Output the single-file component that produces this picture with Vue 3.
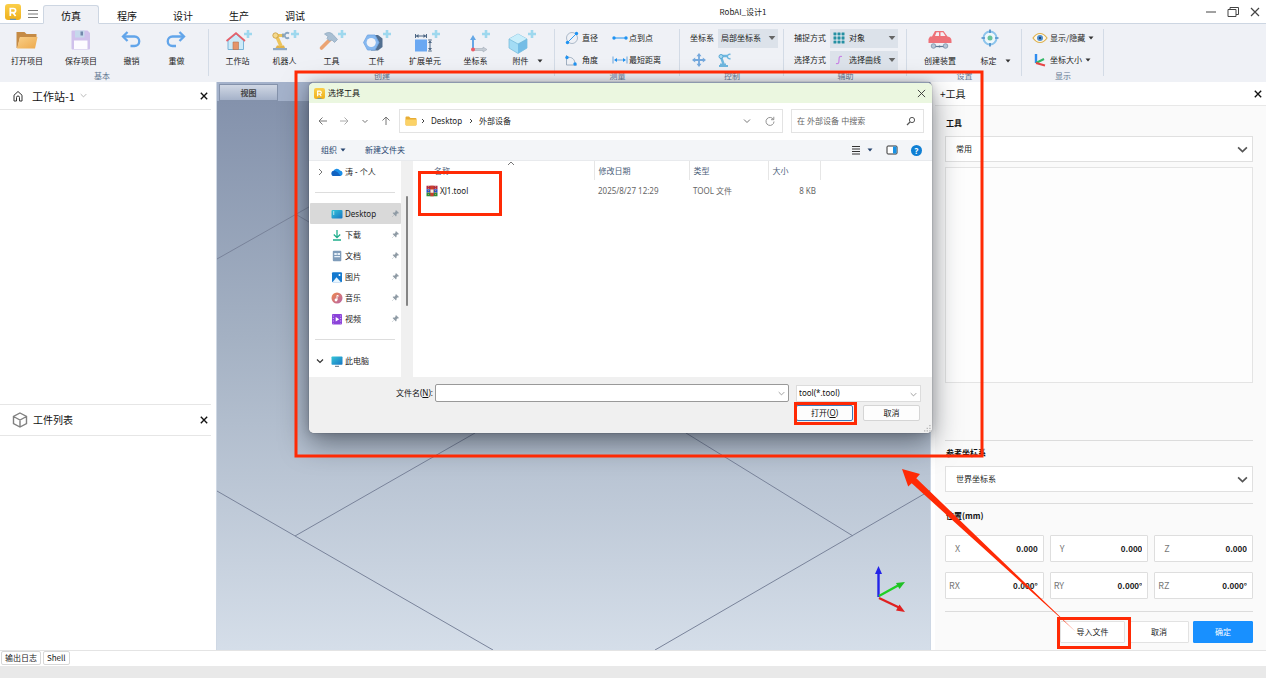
<script setup>
import { ref } from 'vue'

const tabs = ['仿真', '程序', '设计', '生产', '调试']
const activeTab = ref('仿真')

const basicTools = [
  { icon: 'folder', label: '打开项目', size: 'wide' },
  { icon: 'save', label: '保存项目', size: 'wide' },
  { icon: 'undo', label: '撤销', size: 'mid' },
  { icon: 'redo', label: '重做', size: 'slim' },
]
const createTools = [
  { icon: 'house', label: '工作站', size: 'mid' },
  { icon: 'robot', label: '机器人', size: 'mid' },
  { icon: 'hammer', label: '工具', size: 'mid' },
  { icon: 'nut', label: '工件', size: 'slim' },
  { icon: 'extend', label: '扩展单元', size: 'wide' },
  { icon: 'axes', label: '坐标系', size: 'mid' },
  { icon: 'cube', label: '附件', size: 'slim' },
]
const measureTools = [
  { icon: 'diameter', label: '直径' },
  { icon: 'points', label: '点到点' },
  { icon: 'angle', label: '角度' },
  { icon: 'distance', label: '最短距离' },
]
const places = [
  { icon: 'desktop', label: 'Desktop', active: true },
  { icon: 'download', label: '下载' },
  { icon: 'doc', label: '文档' },
  { icon: 'picture', label: '图片' },
  { icon: 'music', label: '音乐' },
  { icon: 'video', label: '视频' },
]
const fields = ref([
  { name: 'X', value: '0.000' },
  { name: 'Y', value: '0.000' },
  { name: 'Z', value: '0.000' },
  { name: 'RX', value: '0.000°' },
  { name: 'RY', value: '0.000°' },
  { name: 'RZ', value: '0.000°' },
])
const fileName = ref('')
</script>

<template>
  <div class="app">
    <svg class="defs" aria-hidden="true">
      <defs>
        <linearGradient id="gFolder" x1="0" y1="0" x2="1" y2="1"><stop offset="0" stop-color="#f9cf87" /><stop offset="1" stop-color="#eda94c" /></linearGradient>
        <linearGradient id="gLogo" x1="0" y1="0" x2="0" y2="1"><stop offset="0" stop-color="#fbcf4a" /><stop offset="1" stop-color="#eeb01c" /></linearGradient>
        <linearGradient id="gScreen" x1="0" y1="0" x2="1" y2="1"><stop offset="0" stop-color="#35c6d8" /><stop offset="1" stop-color="#1775c4" /></linearGradient>
        <linearGradient id="gMusic" x1="0" y1="0" x2="1" y2="1"><stop offset="0" stop-color="#f08a4b" /><stop offset="1" stop-color="#b763a8" /></linearGradient>
      </defs>
      <symbol id="logo" viewBox="0 0 16 16">
        <rect width="16" height="16" rx="3" fill="url(#gLogo)" />
        <path d="M5.300 12V4.500h3.200a2 2 0 0 1 0 4.200H5.300M8 8.700l2.600 3.300" fill="none" stroke="#fff" stroke-width="1.700" />
        <path d="M5 15.300h6" stroke="#4a90d9" stroke-width="1" />
      </symbol>
      <symbol id="plus" viewBox="0 0 8 8"><path d="M2.700 0h2.600v2.700H8v2.600H5.300V8H2.700V5.300H0V2.700h2.700z" fill="#9ed8ee" /></symbol>
      <symbol id="folder" viewBox="0 0 32 26">
        <path d="M5.500 4h8l2 2h10v3H9l-2.500 11h-1z" fill="#c58b45" />
        <path d="M9 9h17.500L24 20.500H6z" fill="url(#gFolder)" />
      </symbol>
      <symbol id="save" viewBox="0 0 32 26">
        <path d="M6.500 3.500a1 1 0 0 1 1-1h15l2.500 2.500v15.500a1 1 0 0 1-1 1h-16.500a1 1 0 0 1-1-1z" fill="#d0c1ec" />
        <path d="M10 2.500h9.500v7H10z" fill="#c6d8ec" /><path d="M15.500 3.500h2.500v4h-2.500z" fill="#7188ab" />
        <path d="M9 12.500h13.500v8.500H9z" fill="#fcfbff" />
      </symbol>
      <symbol id="undo" viewBox="0 0 32 26">
        <path d="M8 8.500h10.500a4.700 4.700 0 0 1 0 9.500h-4" fill="none" stroke="#62a5ea" stroke-width="2.300" />
        <path d="M11.500 4 7 8.500l4.500 4.500" fill="none" stroke="#62a5ea" stroke-width="2.300" />
      </symbol>
      <symbol id="redo" viewBox="0 0 32 26">
        <path d="M22.500 8.500H11.500a4.700 4.700 0 0 0 0 9.500h3.500" fill="none" stroke="#62a5ea" stroke-width="2.300" />
        <path d="M18.500 4 23 8.500 18.500 13" fill="none" stroke="#62a5ea" stroke-width="2.300" />
      </symbol>
      <symbol id="house" viewBox="0 0 32 26">
        <path d="M6 12.500v9h15.500v-9L14 6z" fill="#cdeaf8" stroke="#79b4d8" />
        <path d="M4.500 13 14 5l9 8" fill="none" stroke="#e8606a" stroke-width="1.700" />
        <path d="M11 14h5.500v7.500H11z" fill="#e59468" stroke="#b47450" stroke-width=".6" />
        <use href="#plus" x="22" y="2" width="8" height="8" />
      </symbol>
      <symbol id="robot" viewBox="0 0 32 26">
        <path d="M4 20h14v2.200H4z" fill="#8faac4" /><path d="M8 17.500h7l1 2.500H6.500z" fill="#e2b34a" />
        <path d="M12 18 7.500 8" stroke="#edc45a" stroke-width="3.400" /><path d="M7 7.500h8" stroke="#edc45a" stroke-width="3" />
        <circle cx="6.500" cy="7.500" r="2.700" fill="#f5d98b" stroke="#c59a42" stroke-width=".8" /><path d="M14 5.500v4" stroke="#789ab9" stroke-width="1.500" />
        <path d="M20 5.500a2.600 2.600 0 1 0 0 4" fill="none" stroke="#8aa7c4" stroke-width="1.800" />
        <use href="#plus" x="22" y="2" width="8" height="8" />
      </symbol>
      <symbol id="hammer" viewBox="0 0 32 26">
        <path d="M14 11.500 5.500 20" stroke="#eba473" stroke-width="3.600" stroke-linecap="round" />
        <path d="M8.500 6c3-2 6-2 8.500.5l4.500 5-3 3-2.500-2.500-2.500 1-2.500-2.500 1-2z" fill="#a9bfd3" stroke="#8ba6bf" stroke-width=".7" />
        <use href="#plus" x="22" y="2" width="8" height="8" />
      </symbol>
      <symbol id="nut" viewBox="0 0 32 26">
        <path d="M10 7h7l4.500 3.500v8.500L17 22.500h-7z" fill="#526f90" />
        <path d="M6.500 7h7.500l4 7.500-4 7.500H6.500l-4-7.500z" fill="#86b8f0" stroke="#70a5e2" stroke-width=".8" /><circle cx="10.200" cy="14.500" r="4.600" fill="#f1f3f8" />
        <use href="#plus" x="22" y="2" width="8" height="8" />
      </symbol>
      <symbol id="extend" viewBox="0 0 32 26">
        <path d="M6 11.500h12v12H6z" fill="#6aa8f2" />
        <path d="M7 8h10M6.500 6v4M17.500 6v4M21 13v9M19.200 12h3.600M19.200 23h3.600" stroke="#4d6784" stroke-width="1" fill="none" />
        <path d="m7 8 2.500-2v4zM17 8l-2.500-2v4zM21 12.500l-2 2.500h4zM21 22.500l-2-2.500h4z" fill="#4d6784" />
        <use href="#plus" x="23" y="2" width="8" height="8" />
      </symbol>
      <symbol id="axes" viewBox="0 0 32 26">
        <path d="M13 21V10" stroke="#64a7e6" stroke-width="2" /><path d="m13 7-3 5h6z" fill="#64a7e6" />
        <path d="M13 20.500h10v-1.500l4 2.500-4 2.500v-1.500H13z" fill="#c6cdd5" stroke="#9ba5b0" stroke-width=".5" />
        <circle cx="13" cy="21.500" r="2" fill="#ec5c66" />
        <use href="#plus" x="22" y="2" width="8" height="8" />
      </symbol>
      <symbol id="cube" viewBox="0 0 32 26">
        <path d="m13 6 9 5v9l-9 5.500L4 20v-9z" fill="#a3dcf5" stroke="#72b8d9" stroke-width=".7" />
        <path d="m4 11 9 5 9-5-9-5z" fill="#c9eefb" /><path d="m13 16 9-5v9l-9 5.500z" fill="#74bde6" /><path d="m4 11 9 5 9-5" fill="none" stroke="#72b8d9" stroke-width=".7" />
        <use href="#plus" x="23" y="2" width="8" height="8" />
      </symbol>
      <symbol id="car" viewBox="0 0 32 26">
        <path d="M6 8.500h2L11 3h8.500l4 5.500c3 .5 4 2 4 4.500v2H4.500v-4z" fill="#ee7178" /><path d="M11 8 12.500 4.300H15V8zM16.500 4.300H19L21.500 8h-5z" fill="#f5f0f4" />
        <path d="M10 18.500h11" stroke="#5f7894" stroke-width="1.200" />
        <circle cx="9.500" cy="18" r="2.300" fill="#b5c5d6" stroke="#7b90a8" stroke-width=".8" /><circle cx="21.500" cy="18" r="2.300" fill="#b5c5d6" stroke="#7b90a8" stroke-width=".8" /><circle cx="15.500" cy="18.500" r="1" fill="#5f7894" />
      </symbol>
      <symbol id="target" viewBox="0 0 32 26">
        <circle cx="17" cy="10" r="6.500" fill="#edf7fb" stroke="#8cc4ec" stroke-width="2" />
        <path d="M17 1.500V5M17 15v3.500M8.500 10H12M22 10h3.500" stroke="#4d8fc9" stroke-width="1.700" /><circle cx="17" cy="10" r="2.500" fill="#66c39a" />
      </symbol>
      <symbol id="diameter" viewBox="0 0 16 14">
        <circle cx="7" cy="7" r="5.500" fill="none" stroke="#9aabbe" stroke-width=".8" /><path d="m2.500 11.500 9-9" stroke="#2f9df5" /><circle cx="11.500" cy="2.500" r="1.700" fill="#1f93f2" /><circle cx="2.500" cy="11.500" r="1.700" fill="#1f93f2" />
      </symbol>
      <symbol id="points" viewBox="0 0 16 14"><path d="M2 7h12" stroke="#1f93f2" /><circle cx="2" cy="7" r="1.700" fill="#1f93f2" /><circle cx="14" cy="7" r="1.700" fill="#1f93f2" /></symbol>
      <symbol id="angle" viewBox="0 0 16 14"><path d="M1.500 2v10h10.500M2 4.500c5-1 8 2 8 6.500" fill="none" stroke="#8da0b4" stroke-width=".8" /><circle cx="2" cy="4.500" r="1.700" fill="#1f93f2" /><circle cx="10" cy="11" r="1.700" fill="#1f93f2" /></symbol>
      <symbol id="distance" viewBox="0 0 16 14"><path d="M1 3.500v7M15 3.500v7M3 7h10" stroke="#5b9edb" stroke-width=".9" /><path d="m2 7 3-2v4zM14 7l-3-2v4z" fill="#1f93f2" /></symbol>
      <symbol id="move" viewBox="0 0 14 14"><path d="M7 2v10M2 7h10" stroke="#74a8dd" stroke-width="1.800" /><path d="m7 0 2.500 3.200h-5zM7 14l2.500-3.200h-5zM0 7l3.200-2.500v5zM14 7l-3.200-2.500v5z" fill="#74a8dd" /></symbol>
      <symbol id="arm" viewBox="0 0 14 14"><path d="M1 12h9v2H1zM2 10.500h6V12H2z" fill="#6eb7df" /><path d="M5.500 11 3 4M3 3h6" stroke="#6eb7df" stroke-width="2.400" /><circle cx="3" cy="3.500" r="2" fill="#a6d9f0" stroke="#59a8d5" /><path d="M12.500 1.500a2.200 2.200 0 1 0 0 4" fill="none" stroke="#6eb7df" stroke-width="1.400" /></symbol>
      <symbol id="dots" viewBox="0 0 12 12"><path d="M2 2h8v8H2zM6 2v8M2 6h8" fill="none" stroke="#73c2cc" stroke-width=".7" /><path d="M.5.500h2.800v2.800H.5zM4.600.500h2.800v2.800H4.600zM8.700.500h2.800v2.800H8.700zM.5 4.600h2.800v2.800H.5zM4.600 4.600h2.800v2.800H4.600zM8.700 4.600h2.800v2.800H8.700zM.5 8.700h2.800v2.800H.5zM4.600 8.700h2.800v2.800H4.600zM8.700 8.700h2.800v2.800H8.700z" fill="#258fa2" /></symbol>
      <symbol id="curve" viewBox="0 0 12 12"><path d="M3 9.500c2.500.5 3-.5 3-3.500S6.500 2 9 2.500" fill="none" stroke="#c984e6" stroke-width="1.200" /></symbol>
      <symbol id="eye" viewBox="0 0 16 14"><path d="M1 7c4-6 10-6 14 0-4 6-10 6-14 0z" fill="#fdf9ec" stroke="#ddb04e" stroke-width="1.200" /><circle cx="8" cy="7" r="3" fill="#4c8fd3" /><circle cx="8" cy="7" r="1.200" fill="#24466b" /></symbol>
      <symbol id="triad" viewBox="0 0 16 14"><path d="M4 1v9" stroke="#2d8cf0" stroke-width="2.400" /><path d="m4 10 8-4" stroke="#32b765" stroke-width="2" /><path d="m4 10 9 2.500" stroke="#e64545" stroke-width="2" /></symbol>
      <symbol id="caret" viewBox="0 0 6 6"><path d="M.5 1.500h5L3 4.500z" fill="currentColor" /></symbol>
      <symbol id="chev" viewBox="0 0 10 6"><path d="m1 1 4 4 4-4" fill="none" stroke="currentColor" stroke-width="var(--sw, 1)" /></symbol>
      <symbol id="cross" viewBox="0 0 10 10"><path d="m1 1 8 8M9 1 1 9" stroke="currentColor" stroke-width="var(--sw, 1)" /></symbol>
      <symbol id="pin" viewBox="0 0 8 8"><path d="M4.500 0 8 3.500l-1 .5-.5-.2-1.500 1.500.2 1.300-.7.700L2.700 5.500.3 8 0 7.700l2.500-2.400L.7 3.500l.7-.7 1.300.2L4.200 1.500 4 1z" fill="#8f9ba5" /></symbol>
      <symbol id="cloud" viewBox="0 0 12 12"><path d="M3 10a2.600 2.600 0 0 1-.6-5A3.700 3.700 0 0 1 9 4.500 2.800 2.800 0 0 1 9.500 10z" fill="#1b8fe8" /><path d="M3 10a2.600 2.600 0 0 1 0-5.200C5 4.500 8 7 9.500 10z" fill="#1262c0" /></symbol>
      <symbol id="desktop" viewBox="0 0 12 12"><rect x=".5" y="2" width="11" height="8.500" rx="1" fill="url(#gScreen)" /><path d="M2 4h1.300M2 6h1.300" stroke="#fff" /></symbol>
      <symbol id="download" viewBox="0 0 12 12"><path d="M6 1v7.500M2.800 5.500 6 8.700l3.200-3.200M2 11h8" fill="none" stroke="#1fae8c" stroke-width="1.300" /></symbol>
      <symbol id="doc" viewBox="0 0 12 12"><rect x="1.800" y=".8" width="8.500" height="10.500" rx="1" fill="#7f9cba" /><path d="M3.300 3h2.500v2H3.300zM6.500 3H9v2H6.500zM3.300 6H9v1.300H3.300z" fill="#e8f0f8" /></symbol>
      <symbol id="picture" viewBox="0 0 12 12"><rect x="1" y="1.300" width="10" height="10" rx="1" fill="#1479cf" /><path d="m1.500 11.300 4-5 4.500 5z" fill="#eaf6fe" /><circle cx="8.500" cy="4" r="1" fill="#fff" /></symbol>
      <symbol id="music" viewBox="0 0 12 12"><circle cx="6" cy="6" r="5.500" fill="url(#gMusic)" /><circle cx="5" cy="8" r="1.400" fill="#fff" /><path d="M6 8V3.300l1.800.8" fill="none" stroke="#fff" /></symbol>
      <symbol id="video" viewBox="0 0 12 12"><rect x="1" y="1" width="10" height="10.500" rx="1" fill="#8b43d9" /><path d="M2.300 2.500v8M9.700 2.500v8" stroke="#d8b7f7" stroke-dasharray="1 1.500" /><path d="m4.700 4 3.500 2.200-3.500 2.200z" fill="#fff" /></symbol>
      <symbol id="pc" viewBox="0 0 12 12"><rect x=".5" y="1.500" width="11" height="8.300" rx=".8" fill="url(#gScreen)" /><path d="M4 11.300h4" stroke="#7d8b98" stroke-width="1.200" /></symbol>
      <symbol id="rar" viewBox="0 0 12 12"><path d="M.5.700h11v3.600H.5z" fill="#b02a4c" /><path d="M.5 4.300h11v3.500H.5z" fill="#2b54c4" /><path d="M.5 7.800h11v3.500H.5z" fill="#2f8a3c" /><path d="M4.300.700h3.400v10.600H4.300z" fill="#c8402e" /><path d="M4.500 4.500h3v3.200h-3z" fill="#f6efe0" /><path d="M2.500 1v10M9.500 1v10" stroke="#d6a64e" stroke-width=".8" stroke-dasharray="1 1" /></symbol>
    </svg>

    <header class="titlebar">
      <svg class="logo"><use href="#logo" /></svg>
      <button class="menu" aria-label="菜单"><svg viewBox="0 0 10 10"><path d="M0 1.500h10M0 5h10M0 8.500h10" stroke="#777" /></svg></button>
      <nav class="tabs">
        <button v-for="t in tabs" :key="t" :class="{ on: t === activeTab }" @click="activeTab = t">{{ t }}</button>
      </nav>
      <div class="app-title">RobAI_设计1</div>
      <div class="win-ctl">
        <button aria-label="最小化"><svg viewBox="0 0 12 12"><path d="M1 6h10" stroke="#444" /></svg></button>
        <button aria-label="还原"><svg viewBox="0 0 12 12"><path d="M1 3.500h8v7H1zM3 3.500v-2h8.500v7H9" fill="none" stroke="#444" /></svg></button>
        <button aria-label="关闭"><svg viewBox="0 0 12 12"><path d="m2 2 8 8M10 2l-8 8" stroke="#444" stroke-width="1.200" /></svg></button>
      </div>
    </header>

    <section class="ribbon">
      <div class="group g-basic">
        <div class="big-row">
          <button v-for="b in basicTools" :key="b.label" class="big" :class="b.size"><svg><use :href="'#' + b.icon" /></svg>{{ b.label }}</button>
        </div>
        <div class="caption">基本</div>
      </div>
      <div class="group g-create">
        <div class="big-row">
          <button v-for="b in createTools" :key="b.label" class="big" :class="b.size"><svg><use :href="'#' + b.icon" /></svg>{{ b.label }}</button>
          <button class="drop" aria-label="附件选项"><svg class="caret"><use href="#caret" /></svg></button>
        </div>
        <div class="caption">创建</div>
      </div>
      <div class="group g-measure">
        <div class="small-grid">
          <button v-for="m in measureTools" :key="m.label" class="small"><svg><use :href="'#' + m.icon" /></svg>{{ m.label }}</button>
        </div>
        <div class="caption">测量</div>
      </div>
      <div class="group g-control">
        <div class="rows">
          <div class="line">
            <label for="frame">坐标系</label>
            <div class="combo narrow"><select id="frame"><option>局部坐标系</option></select><svg class="tri"><use href="#caret" /></svg></div>
          </div>
          <div class="line tools">
            <button aria-label="移动"><svg><use href="#move" /></svg></button>
            <button aria-label="机械臂"><svg><use href="#arm" /></svg></button>
          </div>
        </div>
        <div class="caption">控制</div>
      </div>
      <div class="group g-aux">
        <div class="rows">
          <div class="line">
            <label for="snap">捕捉方式</label>
            <div class="combo iconed"><svg class="lead"><use href="#dots" /></svg><select id="snap"><option>对象</option></select><svg class="tri"><use href="#caret" /></svg></div>
          </div>
          <div class="line">
            <label for="pick">选择方式</label>
            <div class="combo iconed"><svg class="lead"><use href="#curve" /></svg><select id="pick"><option>选择曲线</option></select><svg class="tri"><use href="#caret" /></svg></div>
          </div>
        </div>
        <div class="caption">辅助</div>
      </div>
      <div class="group g-set">
        <div class="big-row">
          <button class="big wide"><svg><use href="#car" /></svg>创建装置</button>
          <button class="big slim"><svg><use href="#target" /></svg>标定</button>
          <button class="drop" aria-label="标定选项"><svg class="caret"><use href="#caret" /></svg></button>
        </div>
        <div class="caption">设置</div>
      </div>
      <div class="group g-show">
        <div class="rows">
          <button class="small"><svg><use href="#eye" /></svg>显示/隐藏<svg class="caret"><use href="#caret" /></svg></button>
          <button class="small"><svg><use href="#triad" /></svg>坐标大小<svg class="caret"><use href="#caret" /></svg></button>
        </div>
        <div class="caption">显示</div>
      </div>
    </section>

    <main class="work">
      <aside class="left">
        <section class="tree">
          <div class="panel-head">
            <svg class="home" viewBox="0 0 12 12"><path d="M2 5.200 6 1.500l4 3.700V11H7.500V7.500A1.500 1.500 0 0 0 4.500 7.500V11H2z" fill="none" stroke="#333" /></svg>
            <h2>工作站-1</h2>
            <svg class="chev pale"><use href="#chev" /></svg>
            <button class="close" aria-label="关闭工作站"><svg><use href="#cross" /></svg></button>
          </div>
        </section>
        <section class="parts">
          <div class="panel-head">
            <svg class="box" viewBox="0 0 16 16"><path d="m8 1 6.500 3.500v7L8 15l-6.500-3.500v-7zM1.500 4.500 8 8l6.500-3.500M8 8v7" fill="none" stroke="#808080" stroke-width="1.400" /></svg>
            <h2 class="sub">工件列表</h2>
            <button class="close" aria-label="关闭工件列表"><svg><use href="#cross" /></svg></button>
          </div>
        </section>
      </aside>

      <section class="viewport">
        <div class="view-tabs"><button>视图</button></div>
        <svg class="scene" viewBox="217 101 714 549" preserveAspectRatio="none">
          <path d="M217 259 330 195M297 215l60 35M217 491l276 159M295 536l180-103M686 433l167 103M931 490 655 650" fill="none" stroke="#79839a" stroke-width="1" />
          <path d="M878.500 597v-24" stroke="#2323e8" stroke-width="2.400" /><path d="m878.500 566-3.500 8h7z" fill="#2323e8" />
          <path d="m879 596 19-10.500" stroke="#1fd024" stroke-width="2.400" /><path d="m905 582-9 1 3.500 6z" fill="#1fc024" />
          <path d="m879 598 20 9.500" stroke="#e02020" stroke-width="2.400" /><path d="m905 612-9-1.500 3.500-6z" fill="#e02020" />
        </svg>
      </section>

      <aside class="right">
        <div class="right-head"><h2>+工具</h2><button class="close" aria-label="关闭工具面板"><svg><use href="#cross" /></svg></button></div>
        <form class="tool-form" @submit.prevent>
          <label class="title" for="kind">工具</label>
          <div class="pick"><select id="kind"><option>常用</option></select><svg><use href="#chev" /></svg></div>
          <div class="gallery"></div>
          <hr>
          <label class="title" for="base">参考坐标系</label>
          <div class="pick"><select id="base"><option>世界坐标系</option></select><svg><use href="#chev" /></svg></div>
          <hr>
          <div class="title">位置(mm)</div>
          <div class="coords">
            <label v-for="f in fields" :key="f.name" :class="{ rot: f.name.length > 1 }"><span>{{ f.name }}</span><input v-model="f.value"></label>
          </div>
          <hr>
          <div class="actions">
            <button type="button" class="import">导入文件</button>
            <button type="button">取消</button>
            <button type="submit" class="primary">确定</button>
          </div>
        </form>
      </aside>
    </main>

    <div class="docks"><button>输出日志</button><button>Shell</button></div>
    <footer class="status"></footer>

    <section class="dialog" role="dialog" aria-label="选择工具">
      <div class="d-title"><svg><use href="#logo" /></svg><span>选择工具</span><button aria-label="关闭"><svg><use href="#cross" /></svg></button></div>
      <div class="d-nav">
        <button class="nav" aria-label="后退"><svg viewBox="0 0 10 10"><path d="M9 5H1M4.500 1.500 1 5l3.500 3.500" fill="none" stroke="#777" /></svg></button>
        <button class="nav" aria-label="前进"><svg viewBox="0 0 10 10"><path d="M1 5h8M5.500 1.500 9 5 5.500 8.500" fill="none" stroke="#aaa" /></svg></button>
        <button class="nav" aria-label="历史"><svg viewBox="0 0 10 10"><path d="m2.500 4 2.500 2.500L7.500 4" fill="none" stroke="#777" /></svg></button>
        <button class="nav" aria-label="上一级"><svg viewBox="0 0 10 10"><path d="M5 9V1M1.500 4.500 5 1l3.500 3.500" fill="none" stroke="#777" /></svg></button>
        <div class="address">
          <svg class="fold" viewBox="0 0 12 10"><path d="M.5 1.500a1 1 0 0 1 1-1H4L5.500 2h5a1 1 0 0 1 1 1v5.500a1 1 0 0 1-1 1h-9a1 1 0 0 1-1-1z" fill="#e8ad34" /><path d="M.5 3.500h11v5a1 1 0 0 1-1 1h-9a1 1 0 0 1-1-1z" fill="#fbd266" /></svg>
          <svg class="gt" viewBox="0 0 6 10"><path d="m2 3 2 2-2 2" fill="none" stroke="#444" /></svg>
          <a href="#desktop">Desktop</a>
          <svg class="gt" viewBox="0 0 6 10"><path d="m2 3 2 2-2 2" fill="none" stroke="#444" /></svg>
          <a href="#device">外部设备</a>
          <button class="hist" aria-label="展开"><svg viewBox="0 0 10 10"><path d="m2 3.500 3 3 3-3" fill="none" stroke="#777" /></svg></button>
          <button aria-label="刷新"><svg viewBox="0 0 10 10"><path d="M8.500 3.500A4 4 0 1 0 9 5.500M8.800.800v2.900H6" fill="none" stroke="#888" stroke-width=".9" /></svg></button>
        </div>
        <div class="search"><input aria-label="搜索" placeholder="在 外部设备 中搜索"><svg viewBox="0 0 10 10"><circle cx="6" cy="4" r="2.600" fill="none" stroke="#555" /><path d="M4 6 1 9" stroke="#555" stroke-width="1.200" /></svg></div>
      </div>
      <div class="d-tools">
        <button>组织<svg class="caret"><use href="#caret" /></svg></button>
        <button class="new">新建文件夹</button>
        <button class="ic list" aria-label="视图"><svg viewBox="0 0 10 10"><path d="M1 1.500h8M1 4h8M1 6.500h8M1 9h8" stroke="#333" /></svg><svg class="caret"><use href="#caret" /></svg></button>
        <button class="ic" aria-label="预览窗格"><svg viewBox="0 0 12 10"><rect x="1" y="1" width="10" height="8" rx="1" fill="#fff" stroke="#333" /><path d="M7 1.500h3.500v7H7z" fill="#1993e6" /></svg></button>
        <button class="help" aria-label="帮助">?</button>
      </div>
      <div class="d-body">
        <nav class="places">
          <a href="#cloud"><svg class="exp" viewBox="0 0 8 8"><path d="m3 1 3 3-3 3" fill="none" stroke="#777" /></svg><svg class="pi"><use href="#cloud" /></svg><span>涛 - 个人</span></a>
          <div class="sep"></div>
          <a v-for="p in places" :key="p.label" :href="'#' + p.icon" :class="{ on: p.active }"><svg class="exp" /><svg class="pi"><use :href="'#' + p.icon" /></svg><span>{{ p.label }}</span><svg class="pin"><use href="#pin" /></svg></a>
          <div class="sep"></div>
          <a href="#pc"><svg class="exp" viewBox="0 0 8 8"><path d="m1 2.500 3 3 3-3" fill="none" stroke="#333" stroke-width="1.200" /></svg><svg class="pi"><use href="#pc" /></svg><span>此电脑</span></a>
        </nav>
        <div class="track"><div class="thumb"></div></div>
        <div class="files">
          <svg class="sort" viewBox="0 0 8 5"><path d="m1 4 3-3 3 3" fill="none" stroke="#777" /></svg>
          <table>
            <thead><tr><th class="c-name">名称</th><th class="c-date">修改日期</th><th class="c-type">类型</th><th class="c-size">大小</th><th class="c-rest"></th></tr></thead>
            <tbody><tr><td class="name"><div class="file"><svg><use href="#rar" /></svg>XJ1.tool</div></td><td>2025/8/27 12:29</td><td>TOOL 文件</td><td class="num">8 KB</td><td></td></tr></tbody>
          </table>
        </div>
      </div>
      <div class="d-foot">
        <div class="f-row">
          <label for="fname">文件名(<u>N</u>):</label>
          <div class="fbox"><input id="fname" v-model="fileName"><svg><use href="#chev" /></svg></div>
          <div class="ftype"><select aria-label="文件类型"><option>tool(*.tool)</option></select><svg><use href="#chev" /></svg></div>
        </div>
        <div class="f-btns"><button class="open">打开(<u>O</u>)</button><button>取消</button></div>
        <svg class="grip" viewBox="0 0 8 8"><path d="M6 0h1.500v1.500H6zM6 3h1.500v1.500H6zM6 6h1.500v1.500H6zM3 3h1.500v1.500H3zM3 6h1.500v1.500H3zM0 6h1.500v1.500H0z" fill="#b5b5b5" /></svg>
      </div>
    </section>

    <svg class="marks" viewBox="0 0 1266 678" aria-hidden="true">
      <g fill="none" stroke="#ff2a05" stroke-width="3">
        <rect x="296" y="72" width="686" height="384" />
        <rect x="419.500" y="172.500" width="81" height="42" />
        <rect x="795.500" y="403.500" width="60" height="20" />
        <rect x="1058.500" y="618.500" width="71" height="29" />
      </g>
      <path d="m902 469 18 5-3.700 4.300L1076 632 911.700 483.300l-3.500 3.200z" fill="#ff2a05" />
    </svg>
  </div>
</template>

<style>
body { background: #fff; }
</style>

<style scoped>
.app { position: relative; min-height: 100vh; display: flex; flex-direction: column; font-family: "Noto Sans CJK SC", sans-serif; font-size: 8px; line-height: 12px; color: #222; overflow: hidden; }
* { box-sizing: border-box; }
.defs { position: absolute; width: 0; height: 0; }
button, input, select { font: inherit; color: inherit; border: 0; background: none; padding: 0; margin: 0; outline: 0; min-width: 0; }
select { appearance: none; display: block; width: 100%; height: 100%; }
a { color: inherit; text-decoration: none; }
h2 { margin: 0; font-weight: 400; font-size: 11px; line-height: 16px; color: #111; }
svg { display: block; flex: none; }
.caret { width: 6px; height: 6px; color: #333; }

.titlebar { height: 24px; display: flex; align-items: center; border-bottom: 1px solid #cdd6e2; background: #fff; }
.logo { width: 16px; height: 16px; margin-left: 5px; }
.menu { width: 10px; height: 10px; margin: 4px 5px 0 7px; }
.menu svg { width: 10px; height: 10px; }
.tabs { display: flex; align-self: flex-end; margin-bottom: -1px; }
.tabs button { width: 56px; height: 19px; padding-top: 1px; font-size: 10px; line-height: 18px; color: #111; border: 1px solid transparent; border-radius: 3px 3px 0 0; }
.tabs .on { background: #eff1f6; border-color: #cdd6e2; border-bottom-color: #eff1f6; }
.app-title { flex: 1; text-align: center; }
.win-ctl { width: 103px; display: flex; justify-content: flex-end; gap: 10px; padding-right: 5px; }
.win-ctl svg { width: 12px; height: 12px; }

.ribbon { height: 58px; display: flex; background: #eff1f6; }
.group { position: relative; display: flex; flex-direction: column; justify-content: space-between; padding-top: 4px; flex: none; }
.group::after { content: ""; position: absolute; right: 0; top: 5px; bottom: 6px; width: 1px; background: #d3dbe6; }
.caption { text-align: center; color: #5f7590; line-height: 12px; }
.g-basic { width: 209px; }
.g-basic .caption { padding-right: 5px; }
.g-create { width: 346px; }
.g-create .big-row { padding-left: 5px; }
.g-measure { width: 125px; }
.g-control { width: 104px; }
.g-aux { width: 123px; }
.g-set { width: 115px; }
.g-set .big-row { padding-left: 6px; }
.g-show { width: 82px; }
.big-row { display: flex; }
.big { display: flex; flex-direction: column; align-items: center; gap: 1px; }
.big svg { width: 32px; height: 26px; }
.wide { width: 54px; }
.mid { width: 47px; }
.slim { width: 43px; }
.drop { align-self: flex-end; height: 12px; margin-left: -5px; }
.small-grid { display: grid; grid-template-columns: 47px 1fr; padding: 0 0 0 10px; row-gap: 2px; }
.small { display: flex; align-items: center; gap: 2px; height: 20px; white-space: nowrap; }
.small svg:first-child { width: 16px; height: 14px; }
.small .caret { margin-left: 1px; }
.small-grid .small { gap: 1px; }
.rows { display: flex; flex-direction: column; gap: 2px; padding-left: 10px; }
.line { display: flex; align-items: center; gap: 4px; height: 20px; }
.tools { gap: 12px; padding-left: 2px; }
.tools svg { width: 14px; height: 14px; }
.combo { display: flex; align-items: center; height: 19px; background: #dce2ea; width: 60px; padding: 0 2px 0 3px; gap: 4px; }
.combo select { flex: 1; padding-left: 0; }
.combo.iconed { width: 68px; }
.combo .lead { width: 12px; height: 12px; }
.tri { width: 8px; height: 8px; color: #666; }

.work { flex: 1; display: grid; grid-template-columns: 216px 1fr 335px; border-bottom: 1px solid #e4e4e4; }
.left { display: grid; grid-template-rows: 322px 1fr; padding-right: 5px; background: #fff; }
.panel-head { display: flex; align-items: center; border-bottom: 1px solid #e6e6e6; padding: 0 3px 0 12px; height: 28px; }
.panel-head h2 { margin: 0 5px 0 8px; }
.parts { border-top: 1px solid #e6e6e6; }
.parts .panel-head { height: 31px; }
.home { width: 12px; height: 12px; }
.box { width: 16px; height: 16px; }
.panel-head .sub { margin-left: 5px; font-size: 10px; }
.chev { width: 7px; height: 5px; }
.pale { color: #999; }
.close { margin-left: auto; }
.close svg { width: 8px; height: 8px; color: #111; --sw: 1.7; }

.viewport { display: flex; flex-direction: column; background: linear-gradient(#8492ac 19px, #a4b1c3 45%, #d5dee9); border-left: 1px solid #cfd8e4; min-width: 0; }
.view-tabs { height: 19px; background: #a4b2cb; padding: 2px; }
.view-tabs button { width: 59px; height: 17px; border: 1px solid #8492ab; background: linear-gradient(#d0d7e4, #a5b2c9); font-weight: 700; color: #444; }
.scene { flex: 1; width: 100%; height: 0; min-height: 0; }

.right { background: #fafafa; border-left: 4px solid #fff; box-shadow: -1px 0 #cdd7e4; }
.right-head { height: 24px; display: flex; align-items: center; background: #fff; border-bottom: 1px solid #e8e8e8; padding: 0 4px 0 5px; }
.right-head h2 { font-size: 10px; }
.tool-form { padding: 11px 13px 0 10px; }
.title { display: block; padding-left: 1px; font-weight: 700; color: #111; line-height: 12px; height: 12px; }
.pick { position: relative; height: 26px; margin-top: 7px; border: 1px solid #e0e0e0; background: #fff; }
.pick select { padding-left: 10px; }
.pick svg { position: absolute; right: 4px; top: 9px; width: 11px; height: 7px; color: #555; --sw: 1.5; pointer-events: none; }
.gallery { height: 216px; margin: 5px 0 57px; border: 1px solid #e4e4e4; background: #fdfdfd; }
hr { border: 0; border-top: 1px solid #dcdcdc; margin: 0 0 6px; }
.pick + hr { margin-top: 11px; }
.coords { display: grid; grid-template-columns: repeat(3, 1fr); gap: 10px 6px; margin: 13px 0 12px; }
.coords label { display: flex; align-items: center; height: 27px; border: 1px solid #dedede; background: #fff; padding: 0 5px 0 9px; border-radius: 1px; }
.coords .rot { padding-left: 3px; }
.coords span { font-size: 9px; color: #777; }
.coords input { flex: 1; width: 0; text-align: right; font-weight: 700; color: #222; }
.actions { display: flex; justify-content: flex-end; gap: 4px; padding-top: 3px; }
.actions button { width: 60px; height: 22px; border: 1px solid #e2e2e2; background: #fff; border-radius: 1px; }
.actions .import { width: 65px; }
.actions .primary { background: #1890ff; border-color: #1890ff; color: #fff; }

.docks { height: 15px; display: flex; gap: 2px; padding: 0 1px; background: #fff; }
.docks button { padding: 0 3px; height: 14px; border: 1px solid #d8d8d8; border-radius: 2px; }
.status { height: 12px; background: #e9e9e9; }

.dialog { position: absolute; left: 309px; top: 82px; width: 623px; border-radius: 5px; overflow: hidden; border-top: 1px solid #8d99ae; background: #fff; box-shadow: 0 10px 28px rgba(20, 25, 35, .5), 0 0 8px rgba(30, 35, 45, .2), 0 0 1px rgba(0, 0, 0, .6); font-family: "Noto Sans", "Noto Sans CJK SC", sans-serif; }
.d-title { display: flex; align-items: center; gap: 3px; height: 20px; padding: 0 6px 0 5px; background: #ebf7e0; color: #111; }
.d-title > svg { width: 11px; height: 11px; }
.d-title button { margin-left: auto; }
.d-title button svg { width: 9px; height: 9px; color: #333; }
.d-nav { display: flex; align-items: center; height: 37px; padding: 0 8px 2px 3px; }
.nav { width: 21px; display: flex; justify-content: center; }
.nav svg { width: 10px; height: 10px; }
.address { flex: 1; height: 24px; margin: 0 8px 0 3px; border: 1px solid #e3e3e3; display: flex; align-items: center; padding: 0 7px 0 5px; }
.address a { margin: 0 6px 0 5px; }
.fold { width: 12px; height: 10px; margin-right: 3px; }
.gt { width: 6px; height: 10px; }
.address button svg { width: 10px; height: 10px; }
.address .hist { margin-left: auto; margin-right: 13px; }
.search { width: 133px; height: 24px; border: 1px solid #e3e3e3; display: flex; align-items: center; padding: 0 7px 0 5px; }
.search input { flex: 1; height: 100%; }
.search input::placeholder { color: #666; opacity: 1; }
.search svg { width: 10px; height: 10px; }
.d-tools { display: flex; align-items: center; height: 21px; padding: 0 10px 0 12px; background: #f3f5f8; border-bottom: 1px solid #e8eaed; color: #27456f; }
.d-tools button { display: flex; align-items: center; gap: 3px; }
.d-tools .caret { color: #27456f; }
.d-tools .new { margin-left: 19px; }
.d-tools .ic svg:first-child { width: 12px; height: 10px; }
.d-tools .list { margin-left: auto; gap: 5px; margin-right: 13px; }
.d-tools .help { justify-content: center; width: 11px; height: 11px; margin-left: 13px; border-radius: 50%; background: #0f7fd4; color: #fff; font-weight: 700; line-height: 11px; }
.d-body { display: flex; height: 216px; }
.places { width: 92px; }
.places a { display: flex; align-items: center; height: 21px; padding: 0 2px 0 7px; color: #222; }
.places .on { background: #d9d9d9; margin-left: 1px; padding-left: 6px; border-radius: 1px; }
.exp { width: 8px; height: 8px; }
.pi { width: 12px; height: 12px; margin: 0 2px 0 7px; }
.pin { width: 7px; height: 7px; margin-left: auto; }
.sep { height: 21px; padding: 10px 6px 0; }
.sep::before { content: ""; display: block; border-top: 1px solid #ddd; }
.track { width: 12px; background: #f0f0f0; padding: 35px 5px 0; }
.thumb { height: 110px; width: 2px; background: #858585; border-radius: 1px; }
.files { position: relative; flex: 1; }
.sort { position: absolute; left: 94px; top: 0; width: 8px; height: 5px; }
table { width: 100%; table-layout: fixed; border-collapse: collapse; }
th { height: 19px; padding: 0 4px; font-weight: 400; text-align: left; color: #4b6079; border-right: 1px solid #e6e6e6; }
td { height: 22px; padding: 0 4px; color: #666; white-space: nowrap; }
th:last-child { border: 0; }
.c-name { width: 181px; padding-left: 21px; }
.c-date { width: 95px; }
.c-type { width: 79px; }
.c-size { width: 52px; }
td.name { padding-left: 13px; color: #222; }
.file { display: flex; align-items: center; gap: 2px; }
.file svg { width: 12px; height: 12px; }
.num { text-align: right; }
.d-foot { position: relative; background: #f0f0f0; padding: 7px 11px 12px 0; color: #111; }
.f-row { display: flex; align-items: center; }
.f-row label { width: 124px; text-align: right; margin-right: 2px; }
.fbox, .ftype { position: relative; background: #fff; border: 1px solid #dcdcdc; height: 17px; }
.fbox { flex: 1; height: 18px; border-color: #999; border-radius: 2px; margin-right: 7px; }
.fbox input { width: 100%; height: 100%; padding: 0 14px 0 4px; display: block; }
.ftype { width: 125px; }
.ftype select { padding-left: 2px; }
.fbox svg, .ftype svg { position: absolute; right: 3px; top: 6px; width: 7px; height: 5px; color: #777; pointer-events: none; }
.f-btns { display: flex; justify-content: flex-end; gap: 10px; margin-top: 3px; padding-right: 1px; }
.f-btns button { width: 57px; height: 16px; background: #fdfdfd; border: 1px solid #d5d5d5; border-radius: 2px; }
.f-btns .open { border-color: #3b78b8; }
.grip { position: absolute; right: 1px; bottom: 1px; width: 7px; height: 7px; }
.marks { position: absolute; left: 0; top: 0; width: 1266px; height: 678px; pointer-events: none; }
</style>
